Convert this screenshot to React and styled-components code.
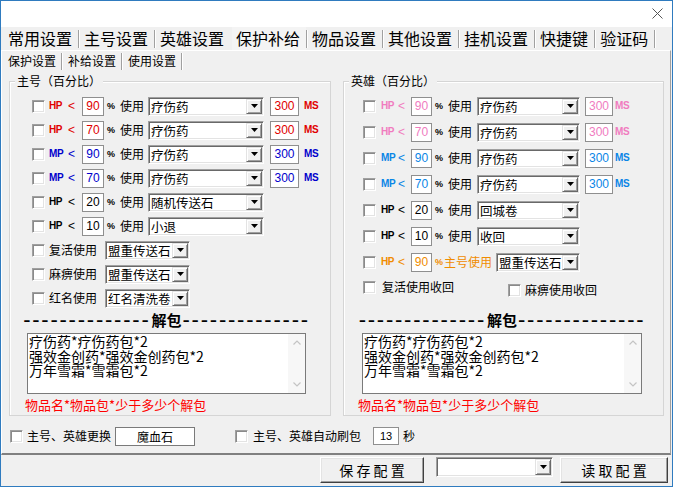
import React from "react";
import styled, { createGlobalStyle } from "styled-components";

const CJK = `"Noto Sans CJK SC", "Noto Sans", sans-serif`;
const LAT = `"Liberation Sans", Arial, sans-serif`;

const COL = {
  red: "#e00000",
  blue: "#0000cc",
  pink: "#f07cbf",
  sky: "#0a86e6",
  orange: "#f08c00",
  black: "#000000",
};

const GlobalStyle = createGlobalStyle`
  html, body { margin: 0; padding: 0; background: #f0f0f0; }
  * { box-sizing: border-box; }
`;

const Window = styled.div`
  width: 673px;
  height: 487px;
  border: 1px solid #2f7bbf;
  background: #f0f0f0;
  display: flex;
  flex-direction: column;
  font-family: ${CJK};
  color: #000;
  overflow: hidden;
`;

const TitleBar = styled.div`
  flex: none;
  height: 26px;
  background: #fff;
  display: flex;
  justify-content: flex-end;
  align-items: flex-start;
  padding: 7px 9px 0 0;
`;

const TabStrip = styled.div`
  flex: none;
  height: 23px;
  display: flex;
  align-items: center;
  padding-left: 3px;
`;

const MainTab = styled.div`
  height: 23px;
  padding: 0 6px 0 4px;
  font-size: 16px;
  line-height: 23px;
  white-space: nowrap;
  background: ${(p) => (p.$active ? "#f4f4f4" : "transparent")};
`;

const TabSep = styled.span`
  flex: none;
  width: 2px;
  height: ${(p) => p.$h}px;
  border-left: 1px solid ${(p) => (p.$hidden ? "transparent" : "#a0a0a0")};
  border-right: 1px solid ${(p) => (p.$hidden ? "transparent" : "#ffffff")};
`;

const Panel = styled.div`
  flex: none;
  height: 405px;
  margin-right: 1px;
  border-top: 1px solid #fff;
  border-left: 1px solid #fff;
  border-right: 1px solid #a0a0a0;
  border-bottom: 2px solid #808080;
  display: flex;
  flex-direction: column;
`;

const SubTabStrip = styled.div`
  flex: none;
  height: 20px;
  display: flex;
  align-items: center;
  padding-left: 1px;
`;

const SubTab = styled.div`
  height: 20px;
  padding: 0 5px;
  font-size: 12px;
  line-height: 20px;
  white-space: nowrap;
`;

const Content = styled.div`
  flex: 1;
  display: flex;
  flex-direction: column;
  padding: 10px 0 0 7px;
`;

const GroupRow = styled.div`
  flex: none;
  height: 335px;
  display: flex;
  gap: 12px;
`;

const GroupBox = styled.div`
  position: relative;
  flex: none;
  width: ${(p) => p.$w}px;
  border: 1px solid #d5d5d5;
  box-shadow: inset 1px 1px 0 #fff;
  padding: ${(p) => p.$pt}px 0 0 ${(p) => p.$pl}px;
  display: flex;
  flex-direction: column;
`;

const Legend = styled.span`
  position: absolute;
  top: -8px;
  left: 5px;
  padding: 0 2px;
  background: #f0f0f0;
  font-size: 12px;
  line-height: 14px;
  white-space: nowrap;
`;

const Row = styled.div`
  flex: none;
  height: ${(p) => p.$h}px;
  display: flex;
  align-items: center;
`;

const CheckBox = styled.span`
  flex: none;
  width: 13px;
  height: 13px;
  margin-right: ${(p) => p.$mr || 0}px;
  background: #fff;
  border: 1px solid;
  border-color: #a0a0a0 #fff #fff #a0a0a0;
  box-shadow: inset 1px 1px 0 #8a8a8a, inset -1px -1px 0 #e3e3e3;
`;

const Stat = styled.span`
  flex: none;
  width: ${(p) => p.$w}px;
  color: ${(p) => p.$c};
  font: bold 10px/14px ${LAT};
  letter-spacing: -0.4px;
`;

const Lt = styled.span`
  flex: none;
  width: ${(p) => p.$w}px;
  color: ${(p) => p.$c};
  font: 12px/14px ${LAT};
`;

const NumBox = styled.div`
  flex: none;
  width: ${(p) => p.$w}px;
  height: ${(p) => p.$h || 19}px;
  margin-left: ${(p) => p.$ml || 0}px;
  background: #fff;
  border: 1px solid #8f8f8f;
  color: ${(p) => p.$c};
  font: ${(p) => p.$fs || 12}px/${(p) => (p.$h || 19) - 2}px ${LAT};
  text-align: center;
`;

const Pct = styled.span`
  flex: none;
  width: ${(p) => p.$w}px;
  padding-left: ${(p) => p.$pl}px;
  color: ${(p) => p.$c};
  font: bold 9px/14px ${LAT};
`;

const UseLabel = styled.span`
  flex: none;
  width: ${(p) => p.$w}px;
  color: ${(p) => p.$c || "#000"};
  font-size: 12px;
  line-height: 14px;
  white-space: nowrap;
`;

const MsLabel = styled.span`
  flex: none;
  margin-left: ${(p) => p.$ml}px;
  color: ${(p) => p.$c};
  font: bold 10px/14px ${LAT};
  letter-spacing: -0.3px;
`;

const RowLabel = styled.span`
  flex: none;
  width: ${(p) => (p.$w ? `${p.$w}px` : "auto")};
  font-size: 12px;
  line-height: 14px;
  white-space: nowrap;
`;

const Shifted = styled.div`
  display: flex;
  align-items: center;
  margin-top: ${(p) => p.$dy}px;
`;

const SelectBox = styled.div`
  flex: none;
  width: ${(p) => p.$w}px;
  height: ${(p) => p.$h || 19}px;
  margin-left: ${(p) => p.$ml || 0}px;
  background: #fff;
  border: 1px solid;
  border-color: #a0a0a0 #fff #fff #a0a0a0;
  box-shadow: inset 1px 1px 0 #696969, inset -1px -1px 0 #e3e3e3;
  padding: 1px;
  display: flex;
  align-items: stretch;
`;

const SelectText = styled.span`
  flex: 1;
  padding-left: 1px;
  font-size: 12.5px;
  line-height: 15px;
  white-space: nowrap;
`;

const DropBtn = styled.span`
  flex: none;
  width: 16px;
  background: #f0f0f0;
  border: 1px solid;
  border-color: #e3e3e3 #696969 #696969 #e3e3e3;
  box-shadow: inset 1px 1px 0 #fff, inset -1px -1px 0 #a0a0a0;
  display: flex;
  align-items: center;
  justify-content: center;
`;

const Arrow = () => (
  <svg width="7" height="4" viewBox="0 0 7 4">
    <path d="M0 0 H7 L3.5 4 Z" fill="#000" />
  </svg>
);

const Select = ({ w, h, ml, text }) => (
  <SelectBox $w={w} $h={h} $ml={ml}>
    <SelectText>{text}</SelectText>
    <DropBtn>
      <Arrow />
    </DropBtn>
  </SelectBox>
);

const Unpack = styled.div`
  margin: auto ${(p) => p.$mr}px 0 ${(p) => p.$ml}px;
  padding-bottom: 2px;
  display: flex;
  flex-direction: column;
`;

const DashLine = styled.div`
  height: 18px;
  margin: 0 -6px;
  display: flex;
  justify-content: center;
  align-items: flex-start;
  white-space: nowrap;
`;

const Dashes = styled.span`
  font: 22px/18px ${LAT};
  letter-spacing: 1.77px;
`;

const UnpackTitle = styled.span`
  font-size: 15px;
  font-weight: 700;
  line-height: 18px;
  padding: 0 1px;
`;

const TextBox = styled.div`
  height: 61px;
  margin-top: 4px;
  background: #fff;
  border: 1px solid #7a7a7a;
  display: flex;
`;

const TextBody = styled.div`
  flex: 1;
  padding: 0 0 0 1px;
  font-size: 14px;
  line-height: 14.5px;
  white-space: pre;
`;

const ScrollBar = styled.div`
  flex: none;
  width: 17px;
  background: #f7f7f7;
  display: flex;
  flex-direction: column;
  justify-content: space-between;
`;

const ScrollBtn = styled.div`
  height: 17px;
  display: flex;
  align-items: center;
  justify-content: center;
`;

const Chevron = ({ up }) => (
  <svg width="8" height="5" viewBox="0 0 8 5">
    <path
      d={up ? "M0.5 4.5 L4 1 L7.5 4.5" : "M0.5 0.5 L4 4 L7.5 0.5"}
      stroke="#c4c4c4"
      strokeWidth="1.2"
      fill="none"
    />
  </svg>
);

const Hint = styled.div`
  margin: 3px 0 0 ${(p) => p.$ml}px;
  color: #ff0000;
  font-size: 13px;
  line-height: 16px;
  white-space: nowrap;
`;

const BottomRow = styled.div`
  flex: none;
  height: 20px;
  margin-top: 10px;
  padding-left: 1px;
  display: flex;
  align-items: center;
`;

const BottomLabel = styled.span`
  flex: none;
  margin-right: ${(p) => p.$mr || 0}px;
  margin-left: ${(p) => p.$ml || 0}px;
  font-size: 12px;
  line-height: 14px;
  white-space: nowrap;
`;

const NameBox = styled.div`
  flex: none;
  width: 80px;
  height: 19px;
  margin-right: ${(p) => p.$mr || 0}px;
  background: #fff;
  border: 1px solid #7a7a7a;
  font-size: 12px;
  line-height: 17px;
  text-align: center;
`;

const ButtonBar = styled.div`
  flex: 1;
  display: flex;
  align-items: flex-start;
  padding: 2px 0 0 319px;
`;

const CmdButton = styled.div`
  flex: none;
  width: ${(p) => p.$w}px;
  height: 26px;
  margin-left: ${(p) => p.$ml || 0}px;
  background: #f0f0f0;
  border: 1px solid;
  border-color: #fff #404040 #404040 #fff;
  box-shadow: inset -1px -1px 0 #a0a0a0, inset 1px 1px 0 #e3e3e3;
  font-size: 14px;
  line-height: 24px;
  text-align: center;
  white-space: pre;
`;

const CloseIcon = () => (
  <svg width="11" height="11" viewBox="0 0 11 11">
    <path d="M0.5 0.5 L10.5 10.5 M10.5 0.5 L0.5 10.5" stroke="#555" strokeWidth="1" fill="none" />
  </svg>
);

const LEFT = { cbGap: 4, stat: 19, lt: 14, num: 22, pct: 16, pctPad: 3, use: 28, sel: 116, msGap: 6, ms: 29, msLabelGap: 5 };
const RIGHT = { cbGap: 5, stat: 17, lt: 13, num: 21, pct: 16, pctPad: 3, use: 29, sel: 103, msGap: 5, ms: 28, msLabelGap: 2 };

const StatRow = ({ c, h, color, stat, num, sel, ms, useText, useW, pctW, selW }) => {
  const special = !!useText;
  return (
    <Row $h={h}>
      <CheckBox $mr={c.cbGap} />
      <Stat $w={c.stat} $c={color}>{stat}</Stat>
      <Lt $w={c.lt} $c={color}>&lt;</Lt>
      <NumBox $w={c.num} $c={color}>{num}</NumBox>
      <Pct $w={pctW || c.pct} $pl={c.pctPad} $c={special ? color : "#000"}>%</Pct>
      <UseLabel $w={useW || c.use} $c={special ? color : "#000"}>{useText || "使用"}</UseLabel>
      <Select w={selW || c.sel} text={sel} />
      {ms && (
        <>
          <NumBox $w={c.ms} $c={color} $ml={c.msGap}>{ms}</NumBox>
          <MsLabel $c={color} $ml={c.msLabelGap}>MS</MsLabel>
        </>
      )}
    </Row>
  );
};

const leftRows = [
  { color: COL.red, stat: "HP", num: "90", sel: "疗伤药", ms: "300" },
  { color: COL.red, stat: "HP", num: "70", sel: "疗伤药", ms: "300" },
  { color: COL.blue, stat: "MP", num: "90", sel: "疗伤药", ms: "300" },
  { color: COL.blue, stat: "MP", num: "70", sel: "疗伤药", ms: "300" },
  { color: COL.black, stat: "HP", num: "20", sel: "随机传送石" },
  { color: COL.black, stat: "HP", num: "10", sel: "小退" },
];

const leftExtra = [
  { label: "复活使用", sel: "盟重传送石" },
  { label: "麻痹使用", sel: "盟重传送石" },
  { label: "红名使用", sel: "红名清洗卷" },
];

const rightRows = [
  { color: COL.pink, stat: "HP", num: "90", sel: "疗伤药", ms: "300" },
  { color: COL.pink, stat: "HP", num: "70", sel: "疗伤药", ms: "300" },
  { color: COL.sky, stat: "MP", num: "90", sel: "疗伤药", ms: "300" },
  { color: COL.sky, stat: "MP", num: "70", sel: "疗伤药", ms: "300" },
  { color: COL.black, stat: "HP", num: "20", sel: "回城卷" },
  { color: COL.black, stat: "HP", num: "10", sel: "收回" },
  { color: COL.orange, stat: "HP", num: "90", sel: "盟重传送石", useText: "主号使用", pctW: 12, useW: 52, selW: 84 },
];

const UNPACK_TEXT = "疗伤药*疗伤药包*2\n强效金创药*强效金创药包*2\n万年雪霜*雪霜包*2";
const DASHES = "--------------";

const UnpackSection = ({ ml, mr, hintMl }) => (
  <Unpack $ml={ml} $mr={mr}>
    <DashLine>
      <Dashes>{DASHES}</Dashes>
      <UnpackTitle>解包</UnpackTitle>
      <Dashes>{DASHES}</Dashes>
    </DashLine>
    <TextBox>
      <TextBody>{UNPACK_TEXT}</TextBody>
      <ScrollBar>
        <ScrollBtn>
          <Chevron up />
        </ScrollBtn>
        <ScrollBtn>
          <Chevron />
        </ScrollBtn>
      </ScrollBar>
    </TextBox>
    <Hint $ml={hintMl}>物品名*物品包*少于多少个解包</Hint>
  </Unpack>
);

const mainTabs = ["常用设置", "主号设置", "英雄设置", "保护补给", "物品设置", "其他设置", "挂机设置", "快捷键", "验证码"];
const ACTIVE = 3;
const subTabs = ["保护设置", "补给设置", "使用设置"];

export default function App() {
  return (
    <>
      <GlobalStyle />
      <Window>
        <TitleBar>
          <CloseIcon />
        </TitleBar>
        <TabStrip>
          {mainTabs.map((t, i) => (
            <React.Fragment key={t}>
              <MainTab $active={i === ACTIVE}>{t}</MainTab>
              <TabSep $h={18} $hidden={i === ACTIVE - 1} />
            </React.Fragment>
          ))}
        </TabStrip>
        <Panel>
          <SubTabStrip>
            {subTabs.map((t) => (
              <React.Fragment key={t}>
                <SubTab>{t}</SubTab>
                <TabSep $h={17} />
              </React.Fragment>
            ))}
          </SubTabStrip>
          <Content>
            <GroupRow>
              <GroupBox $w={322} $pt={12} $pl={22}>
                <Legend>主号（百分比）</Legend>
                {leftRows.map((r, i) => (
                  <StatRow key={i} c={LEFT} h={24} {...r} />
                ))}
                {leftExtra.map((r) => (
                  <Row key={r.label} $h={24}>
                    <CheckBox $mr={4} />
                    <RowLabel $w={56}>{r.label}</RowLabel>
                    <Select w={85} text={r.sel} />
                  </Row>
                ))}
                <UnpackSection ml={-5} mr={24} hintMl={-2} />
              </GroupBox>
              <GroupBox $w={321} $pt={11} $pl={19}>
                <Legend>英雄（百分比）</Legend>
                {rightRows.map((r, i) => (
                  <StatRow key={i} c={RIGHT} h={26} {...r} />
                ))}
                <Row $h={24}>
                  <CheckBox $mr={6} />
                  <RowLabel $w={126}>复活使用收回</RowLabel>
                  <Shifted $dy={6}>
                    <CheckBox $mr={4} />
                    <RowLabel>麻痹使用收回</RowLabel>
                  </Shifted>
                </Row>
                <UnpackSection ml={-1} mr={21} hintMl={-4} />
              </GroupBox>
            </GroupRow>
            <BottomRow>
              <CheckBox $mr={4} />
              <BottomLabel $mr={4}>主号、英雄更换</BottomLabel>
              <NameBox $mr={40}>魔血石</NameBox>
              <CheckBox $mr={5} />
              <BottomLabel $mr={12}>主号、英雄自动刷包</BottomLabel>
              <NumBox $w={26} $h={18} $fs={11} $c="#000">13</NumBox>
              <BottomLabel $ml={4}>秒</BottomLabel>
            </BottomRow>
          </Content>
        </Panel>
        <ButtonBar>
          <CmdButton $w={104}>保 存 配 置</CmdButton>
          <Select w={117} h={20} ml={12} text="" />
          <CmdButton $w={108} $ml={7}>读 取 配 置</CmdButton>
        </ButtonBar>
      </Window>
    </>
  );
}
